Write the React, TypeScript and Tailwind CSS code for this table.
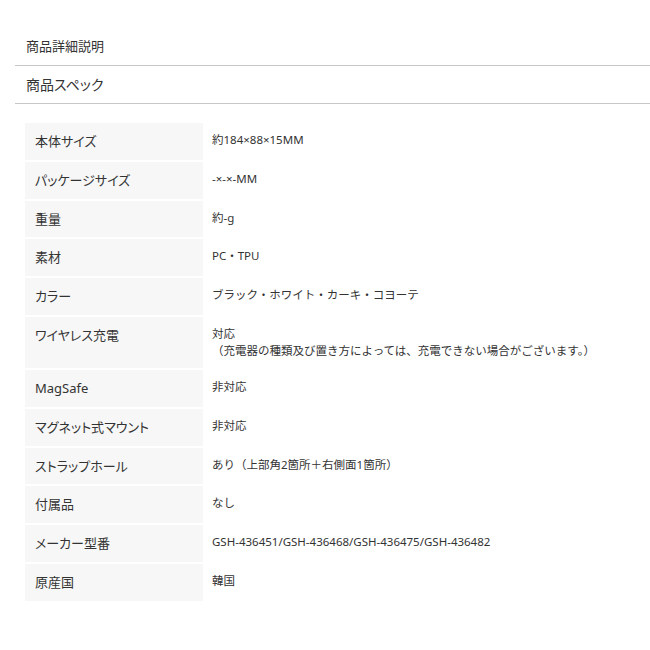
import React from 'react';

const specs: { label: string; value: string[] }[] = [
  { label: '本体サイズ', value: ['約184×88×15MM'] },
  { label: 'パッケージサイズ', value: ['-×-×-MM'] },
  { label: '重量', value: ['約-g'] },
  { label: '素材', value: ['PC・TPU'] },
  { label: 'カラー', value: ['ブラック・ホワイト・カーキ・コヨーテ'] },
  {
    label: 'ワイヤレス充電',
    value: ['対応', '（充電器の種類及び置き方によっては、充電できない場合がございます。）'],
  },
  { label: 'MagSafe', value: ['非対応'] },
  { label: 'マグネット式マウント', value: ['非対応'] },
  { label: 'ストラップホール', value: ['あり（上部角2箇所＋右側面1箇所）'] },
  { label: '付属品', value: ['なし'] },
  { label: 'メーカー型番', value: ['GSH-436451/GSH-436468/GSH-436475/GSH-436482'] },
  { label: '原産国', value: ['韓国'] },
];

export default function App() {
  return (
    <div
      className="min-h-[650px] w-[650px] bg-white pt-[28px] pl-[15px] text-[#333]"
      style={{ fontFamily: '"Noto Sans", "Noto Sans CJK JP", sans-serif' }}
    >
      {/* section headers */}
      <div className="flex h-[38px] items-center border-b border-[#c8c8c8] pt-[1px] pl-[11px] text-[13px] [font-feature-settings:'palt']">
        商品詳細説明
      </div>
      <div className="flex h-[38px] items-center border-b border-[#c8c8c8] pl-[11px] text-[14px] [font-feature-settings:'palt']">
        商品スペック
      </div>

      {/* spec table */}
      <div className="mt-[19px] ml-[10px] flex w-[610px] flex-col gap-[2px]">
        {specs.map((s) => (
          <div key={s.label} className="flex">
            <div className="w-[178px] shrink-0 bg-[#f7f7f7] px-[10px] pt-[10px] pb-[10px] text-[13px] leading-[16.8px] [font-feature-settings:'palt']">
              {s.label}
            </div>
            <div className="flex-1 pl-[9px] pt-[8px] pb-[9px] text-[11.5px] leading-[17px]">
              {s.value.map((v, i) => (
                <div key={i}>{v}</div>
              ))}
            </div>
          </div>
        ))}
      </div>
    </div>
  );
}
